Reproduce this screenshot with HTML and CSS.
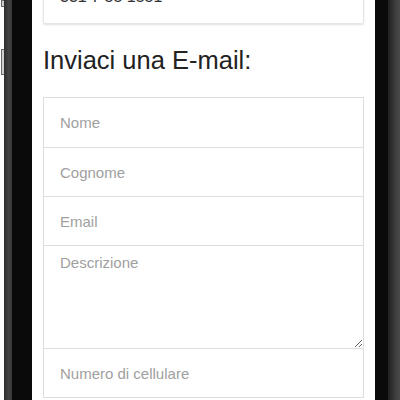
FILE: index.html
```
<!DOCTYPE html>
<html lang="it">
<head>
<meta charset="utf-8">
<title>Contatti</title>
<link rel="stylesheet" href="styles.css">
</head>
<body>
<div class="phone">
  <div class="bezel-left">
    <div class="edge">
      <span class="btn btn-top"></span>
      <span class="btn btn-vol"></span>
    </div>
    <div class="rim"></div>
    <div class="frame"></div>
  </div>
  <main class="screen">
    <div class="card">
      <p class="phone-num">331 7 55 1551</p>
    </div>
    <h2 class="title">Inviaci una E-mail:</h2>
    <form class="form">
      <input class="field first" type="text" placeholder="Nome">
      <input class="field" type="text" placeholder="Cognome">
      <input class="field" type="email" placeholder="Email">
      <textarea class="field area" placeholder="Descrizione"></textarea>
      <input class="field" type="tel" placeholder="Numero di cellulare">
    </form>
  </main>
  <div class="bezel-right"></div>
</div>
</body>
</html>
```
FILE: styles.css
```
html, body {
  margin: 0;
  padding: 0;
  background: #fff;
}
body {
  font-family: "Liberation Sans", Arial, sans-serif;
  overflow: hidden;
}
.phone {
  display: flex;
  height: 400px;
  overflow: hidden;
}
.bezel-left {
  display: flex;
  width: 32px;
  flex: none;
}
.edge {
  width: 4px;
  background: #fff;
  display: flex;
  flex-direction: column;
  align-items: flex-end;
}
.btn {
  display: block;
  width: 2px;
  background: #cfcfcf;
  border: 1px solid #6a6a6a;
  border-right: none;
}
.btn-top {
  height: 5px;
  margin-top: 0;
}
.btn-vol {
  height: 24px;
  margin-top: 42px;
}
.rim {
  width: 8px;
  background: linear-gradient(to right, #2e2e2e, #444 60%, #383838);
}
.frame {
  width: 20px;
  background: #0a0a0a;
}
.bezel-right {
  width: 25px;
  flex: none;
  background: linear-gradient(to right, #0a0a0a 0 13px, #222 13px, #2f2f2f 17px, #404040 21px, #4a4a4a 25px);
}
.screen {
  flex: 1;
  min-width: 0;
  background: #fff;
  padding: 0 11px;
}
.card {
  margin-top: -20px;
  height: 44px;
  box-sizing: border-box;
  border: 1px solid #e6e6e6;
  border-radius: 2px;
  box-shadow: 0 1px 2px rgba(0, 0, 0, 0.12);
  padding: 5.5px 16px 0;
}
.phone-num {
  margin: 0;
  font-size: 16px;
  line-height: 20px;
  color: #333;
}
.title {
  margin: 22px 0 23px;
  font-size: 25.5px;
  line-height: 28px;
  font-weight: normal;
  color: #222;
}
.form {
  display: flex;
  flex-direction: column;
}
.field {
  display: block;
  box-sizing: border-box;
  width: 100%;
  height: 50px;
  margin: 0 0 -1px;
  padding: 0 16px;
  border: 1px solid #ddd;
  border-radius: 0;
  background: #fff;
  font-family: "Liberation Sans", Arial, sans-serif;
  font-size: 15px;
  color: #333;
  outline: none;
}
.field.first {
  height: 51px;
}
.field::placeholder {
  color: #a0a0a0;
}
.area {
  height: 104px;
  padding: 6px 16px;
  line-height: 1.42857;
  resize: vertical;
}
```
